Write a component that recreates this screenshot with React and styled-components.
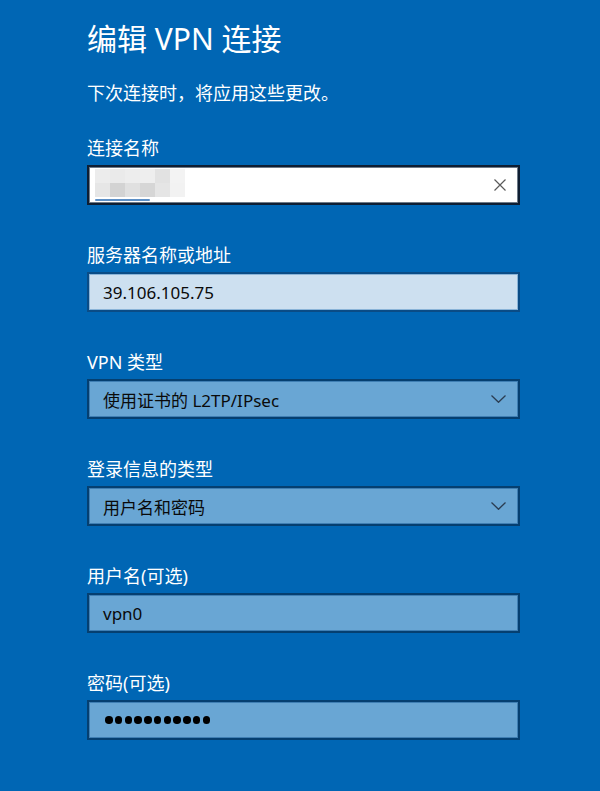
import React from "react";
import styled, { createGlobalStyle } from "styled-components";

const GlobalStyle = createGlobalStyle`
  html, body {
    margin: 0;
    padding: 0;
    background: #0066b4;
  }
  body {
    font-family: "Noto Sans", "Noto Sans CJK SC", sans-serif;
    color: #ffffff;
  }
`;

const Page = styled.div`
  min-height: 791px;
  box-sizing: border-box;
  padding: 20px 0 0 87px;
  background: #0066b4;
`;

const Title = styled.h1`
  margin: 0;
  font-size: 30px;
  line-height: 38px;
  font-weight: 400;
  color: #ffffff;
`;

const Subtitle = styled.p`
  margin: 23px 0 31px;
  font-size: 18px;
  line-height: 24px;
  color: #ffffff;
`;

const Form = styled.div`
  display: flex;
  flex-direction: column;
  gap: 38px;
`;

const Field = styled.div`
  display: flex;
  flex-direction: column;
`;

const Label = styled.label`
  font-size: 18px;
  line-height: 24px;
  margin-bottom: 5px;
  color: #ffffff;
`;

const variants = {
  focused: { bg: "#ffffff", border: "#0e1e33", inner: "#6d7a88" },
  light: { bg: "#cde0f0", border: "#0a4c86", inner: "#8ab4d8" },
  filled: { bg: "#69a6d4", border: "#053f70", inner: "#3f7fb4" },
};

const Box = styled.div`
  box-sizing: border-box;
  width: 433px;
  height: 40px;
  display: flex;
  align-items: center;
  padding: 0 12px 0 14px;
  background: ${(p) => variants[p.$variant].bg};
  border: 2px solid ${(p) => variants[p.$variant].border};
  box-shadow: inset 0 0 0 1px ${(p) => variants[p.$variant].inner};
  color: #0a0a0a;
  font-size: 17px;
`;

const Value = styled.span`
  flex: 1;
  white-space: nowrap;
`;

const Masked = styled.span`
  flex: 1;
  display: flex;
  gap: 2.25px;
  padding-left: 2px;
`;

const Dot = styled.span`
  width: 7.5px;
  height: 7.5px;
  border-radius: 50%;
  background: #000;
`;

const Mosaic = styled.div`
  flex: 1;
  align-self: stretch;
  display: flex;
  flex-direction: column;
  justify-content: center;
  margin-left: -12px;
`;

const MosaicRow = styled.div`
  display: flex;
  padding-left: 4px;
`;

const Cell = styled.span`
  width: 15px;
  height: 14px;
  background: ${(p) => p.$c};
  filter: blur(0.6px);
`;

const Smear = styled.span`
  width: 55px;
  height: 2px;
  margin-top: 2px;
  background: #5c8fc6;
  border-radius: 1px;
  filter: blur(0.5px);
`;

const IconSlot = styled.span`
  display: flex;
  align-items: center;
  justify-content: center;
`;

const ClearIcon = () => (
  <svg width="12" height="12" viewBox="0 0 12 12">
    <path d="M0.5 0.5 L11.5 11.5 M11.5 0.5 L0.5 11.5" stroke="#5a5a5a" strokeWidth="1.2" fill="none" />
  </svg>
);

const Chevron = () => (
  <svg width="15" height="8" viewBox="0 0 15 8">
    <path d="M0.5 0.5 L7.5 7.3 L14.5 0.5" stroke="#2b3d52" strokeWidth="1.3" fill="none" />
  </svg>
);

const row1 = ["#ececec", "#eaeaea", "#ededed", "#eeeeee", "#e2e2e2", "#f3f3f3"];
const row2 = ["#e6e6e6", "#d3d3d3", "#e0e0e0", "#d6d6d6", "#e5e5e5", "#f2f2f2"];

export default function App() {
  return (
    <>
      <GlobalStyle />
      <Page>
        <Title>编辑 VPN 连接</Title>
        <Subtitle>下次连接时，将应用这些更改。</Subtitle>
        <Form>
          <Field>
            <Label>连接名称</Label>
            <Box $variant="focused">
              <Mosaic>
                <MosaicRow>
                  {row1.map((c, i) => (
                    <Cell key={i} $c={c} />
                  ))}
                </MosaicRow>
                <MosaicRow>
                  {row2.map((c, i) => (
                    <Cell key={i} $c={c} />
                  ))}
                </MosaicRow>
                <MosaicRow>
                  <Smear />
                </MosaicRow>
              </Mosaic>
              <IconSlot>
                <ClearIcon />
              </IconSlot>
            </Box>
          </Field>
          <Field>
            <Label>服务器名称或地址</Label>
            <Box $variant="light">
              <Value>39.106.105.75</Value>
            </Box>
          </Field>
          <Field>
            <Label>VPN 类型</Label>
            <Box $variant="filled">
              <Value>使用证书的 L2TP/IPsec</Value>
              <IconSlot>
                <Chevron />
              </IconSlot>
            </Box>
          </Field>
          <Field>
            <Label>登录信息的类型</Label>
            <Box $variant="filled">
              <Value>用户名和密码</Value>
              <IconSlot>
                <Chevron />
              </IconSlot>
            </Box>
          </Field>
          <Field>
            <Label>用户名(可选)</Label>
            <Box $variant="filled">
              <Value>vpn0</Value>
            </Box>
          </Field>
          <Field>
            <Label>密码(可选)</Label>
            <Box $variant="filled" aria-label="密码">
              <Masked>
                {Array.from({ length: 11 }).map((_, i) => (
                  <Dot key={i} />
                ))}
              </Masked>
            </Box>
          </Field>
        </Form>
      </Page>
    </>
  );
}
